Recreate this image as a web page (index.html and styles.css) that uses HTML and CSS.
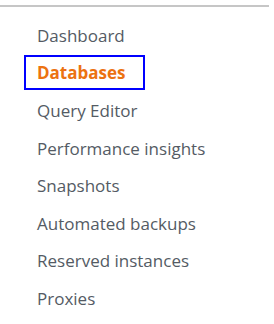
FILE: index.html
```html
<!DOCTYPE html>
<html lang="en">
<head>
  <meta charset="UTF-8">
  <title>RDS - Navigation</title>
  <link rel="stylesheet" href="styles.css">
</head>
<body>
  <div class="divider"></div>
  <nav class="side-nav">
    <ul>
      <li><a href="#">Dashboard</a></li>
      <li><a href="#" class="active">Databases</a></li>
      <li><a href="#">Query Editor</a></li>
      <li><a href="#">Performance insights</a></li>
      <li><a href="#">Snapshots</a></li>
      <li><a href="#">Automated backups</a></li>
      <li><a href="#">Reserved instances</a></li>
      <li><a href="#">Proxies</a></li>
    </ul>
  </nav>
</body>
</html>
```

FILE: styles.css
```css
body {
  margin: 0;
  padding: 0;
  background: #fff;
  font-family: 'Open Sans', 'Noto Sans', sans-serif;
  color: #545b64;
}
.divider {
  margin-top: 5px;
  width: 269px;
  height: 2px;
  background: #c6c6c6;
}
.side-nav ul {
  list-style: none;
  margin: 10px 0 0;
  padding: 0 0 0 37px;
}
.side-nav li {
  height: 37.5px;
  display: flex;
  align-items: center;
}
.side-nav a {
  text-decoration: none;
  color: #545b64;
  font-size: 17px;
  line-height: 23px;
}
.side-nav a.active {
  color: #ec7211;
  font-weight: bold;
  border: 2px solid #0000ff;
  width: 95px;
  padding: 4px 11px;
  margin-left: -13px;
  margin-top: -2px;
}
```
